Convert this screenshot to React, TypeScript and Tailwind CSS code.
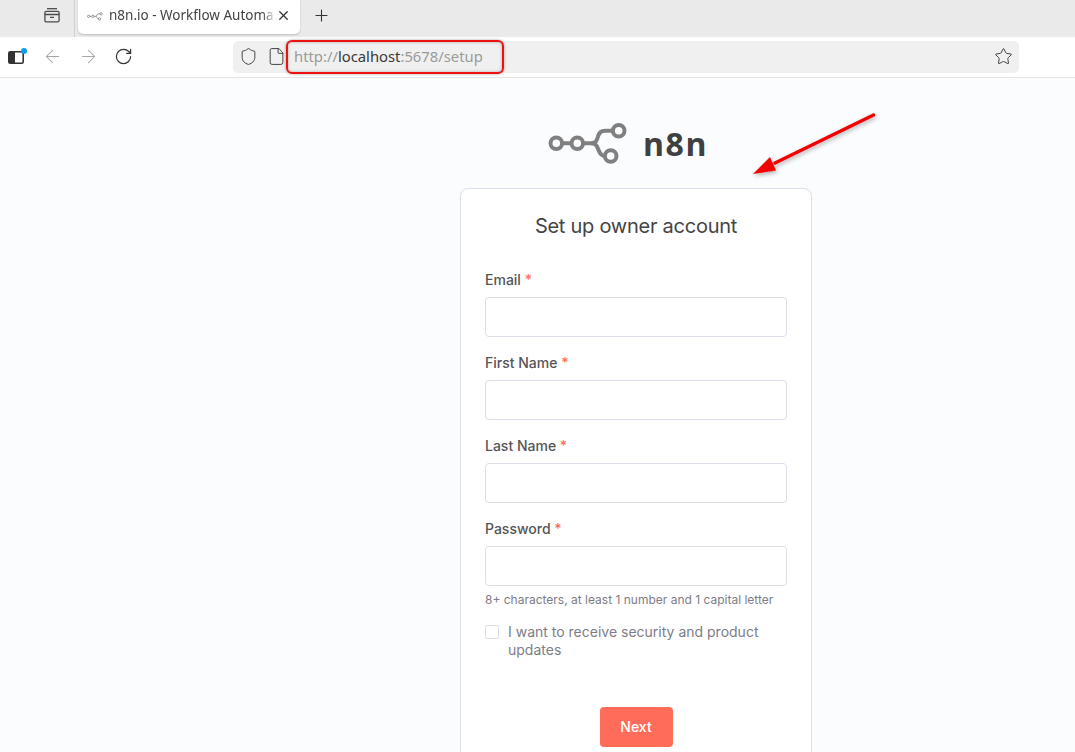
import React from 'react';
import { ArrowLeft, ArrowRight, File, Plus, RotateCw, Shield, Star, X } from 'lucide-react';

const N8nLogo: React.FC<{ className?: string }> = ({ className }) => (
  <svg viewBox="0 0 80 44" fill="none" stroke="currentColor" strokeWidth="4" className={className}>
    <circle cx="8.3" cy="21.3" r="5.8" />
    <circle cx="29.3" cy="21.3" r="5.8" />
    <circle cx="70.7" cy="8.7" r="5.8" />
    <circle cx="62.7" cy="34" r="5.8" />
    <path d="M14 21.3H23.6M35 21.3H43C48 21.3 49 18 50 14.5C51 10.5 53 8.7 57 8.7H65" />
    <path d="M43 21.3C48 21.3 49 24 50.5 28C52 32 53.5 34 57 34" />
  </svg>
);

const Field: React.FC<{ label: string; hint?: string }> = ({ label, hint }) => (
  <div className="flex flex-col">
    <label className="h-[18px] mb-2 text-sm leading-[18px] font-medium text-[#555]">
      {label} <span className="text-[#ff6d5a]">*</span>
    </label>
    <div className="h-10 bg-white border border-[#dbdfe7] rounded-[4px]" />
    {hint && <p className="mt-[5px] text-xs leading-[18px] text-[#7d7d87]">{hint}</p>}
  </div>
);

export default function App() {
  return (
    <div className="relative h-[752px] overflow-hidden flex flex-col bg-[#fbfcfe] font-['Inter',sans-serif]">
      {/* Tab strip */}
      <div className="h-[37px] flex-shrink-0 flex items-start bg-[#eaeaea] text-[#3b3b3b] font-['Noto_Sans',sans-serif]">
        <div className="w-[75px] h-[37px] flex items-center justify-end pr-[14px] pb-[7px] border-r border-[#d0d0d0]">
          <svg viewBox="0 0 16 16" fill="none" stroke="#4a4a4a" strokeWidth="1.3" className="w-4 h-4">
            <path d="M3 1.7H13" />
            <rect x="0.9" y="4.3" width="14.2" height="10.6" rx="1.5" />
            <path d="M0.9 7.5H15.1M6 10.4H10" />
          </svg>
        </div>
        <div className="ml-[3px] w-[222px] h-[34px] flex items-center pl-[9px] pr-[9px] pb-[3px] bg-white rounded-b-[5px] shadow-[0_1px_2px_rgba(0,0,0,0.2)]">
          <N8nLogo className="w-[16px] h-[9px] flex-shrink-0 text-[#808080] mt-[1px]" />
          <span className="ml-[6px] flex-1 whitespace-nowrap text-[13.5px] text-[#444] [mask-image:linear-gradient(to_right,black_92%,transparent)]">
            n8n.io - Workflow Automa
          </span>
          <X className="w-[15px] h-[15px] text-[#333]" strokeWidth={2} />
        </div>
        <div className="ml-[12px] h-[30px] flex items-center">
          <Plus className="w-[19px] h-[19px] text-[#333]" strokeWidth={1.4} />
        </div>
      </div>

      {/* Toolbar */}
      <div className="h-[41px] flex-shrink-0 flex items-center bg-white border-b border-[#e4e4e7] pb-[1px]">
        <div className="relative ml-[8px] w-4 h-4 flex items-center">
          <svg viewBox="0 0 16 14" className="w-4 h-[14px]">
            <rect x="0.8" y="1.8" width="14.4" height="11.4" rx="1.5" fill="none" stroke="#333" strokeWidth="1.6" />
            <rect x="1" y="2" width="6" height="11" fill="#333" />
          </svg>
          <span className="absolute -top-[1px] -right-[3px] w-[6px] h-[6px] rounded-full bg-[#0a9cf5]" />
        </div>
        <ArrowLeft className="ml-[18px] w-[21px] h-[21px] text-[#a8a8a8]" strokeWidth={1.2} />
        <ArrowRight className="ml-[15px] w-[21px] h-[21px] text-[#a8a8a8]" strokeWidth={1.2} />
        <RotateCw className="ml-[15px] w-[19px] h-[19px] text-[#333]" strokeWidth={1.5} />
        <div className="ml-[100px] w-[786px] h-8 flex items-center bg-[#f0f0f0] rounded-[5px] text-[#3b3b3b]">
          <Shield className="ml-[6px] w-[19px] h-[19px]" strokeWidth={1.2} />
          <File className="ml-[9px] w-[19px] h-[19px]" strokeWidth={1.2} />
          <span className="ml-[8px] text-[14.8px] text-[#9a9a9a] font-['Noto_Sans',sans-serif]">
            http://<span className="text-[#3a3a3a]">localhost</span>:5678/setup
          </span>
          <Star className="ml-auto mr-[6px] w-[19px] h-[19px]" strokeWidth={1.2} />
        </div>
      </div>

      {/* Page */}
      <div className="flex-1 flex flex-col items-center pl-[197px]">
        <div className="mt-[43px] mr-[16px] flex items-center text-[#808080] h-[46px]">
          <N8nLogo className="w-[80px] h-[44px]" />
          <span className="ml-[15px] text-[32px] leading-none font-bold tracking-[1.5px] text-[#404040] font-['Open_Sans',sans-serif]">
            n8n
          </span>
        </div>
        <div className="mt-[21px] w-[352px] flex-shrink-0 bg-white border border-[#dbdfe7] rounded-lg px-6 pt-[22px] pb-6">
          <h1 className="text-[20px] leading-[30px] tracking-[-0.25px] text-center text-[#444]">Set up owner account</h1>
          <div className="mt-[30px] flex flex-col gap-[17px]">
            <Field label="Email" />
            <Field label="First Name" />
            <Field label="Last Name" />
            <Field label="Password" hint="8+ characters, at least 1 number and 1 capital letter" />
          </div>
          <label className="mt-[14px] flex items-start">
            <span className="mt-[2px] w-[14px] h-[14px] flex-shrink-0 bg-white border border-[#dbdfe7] rounded-[2px]" />
            <span className="ml-[9px] text-sm leading-[18px] text-[#7d7d87]">
              I want to receive security and product updates
            </span>
          </label>
          <div className="mt-[48px] flex justify-center">
            <button className="w-[73px] h-10 bg-[#ff6d5a] rounded-[4px] text-sm font-medium text-white">Next</button>
          </div>
        </div>
      </div>

      {/* Screenshot annotations */}
      <div className="absolute left-[286px] top-[40px] w-[218px] h-[34px] border-2 border-[#ee1111] rounded-[6px] shadow-[0_0_3px_rgba(0,0,0,0.35),inset_0_0_3px_rgba(0,0,0,0.3)]" />
      <svg className="absolute left-[745px] top-[105px] w-[140px] h-[80px] drop-shadow-[1px_2px_2px_rgba(0,0,0,0.3)]" viewBox="0 0 140 80">
        <path d="M128.5 10L30 58" stroke="#f50000" strokeWidth="3.4" strokeLinecap="round" />
        <path d="M8 69L25 52L31 65.5Z" fill="#f50000" />
      </svg>
    </div>
  );
}
